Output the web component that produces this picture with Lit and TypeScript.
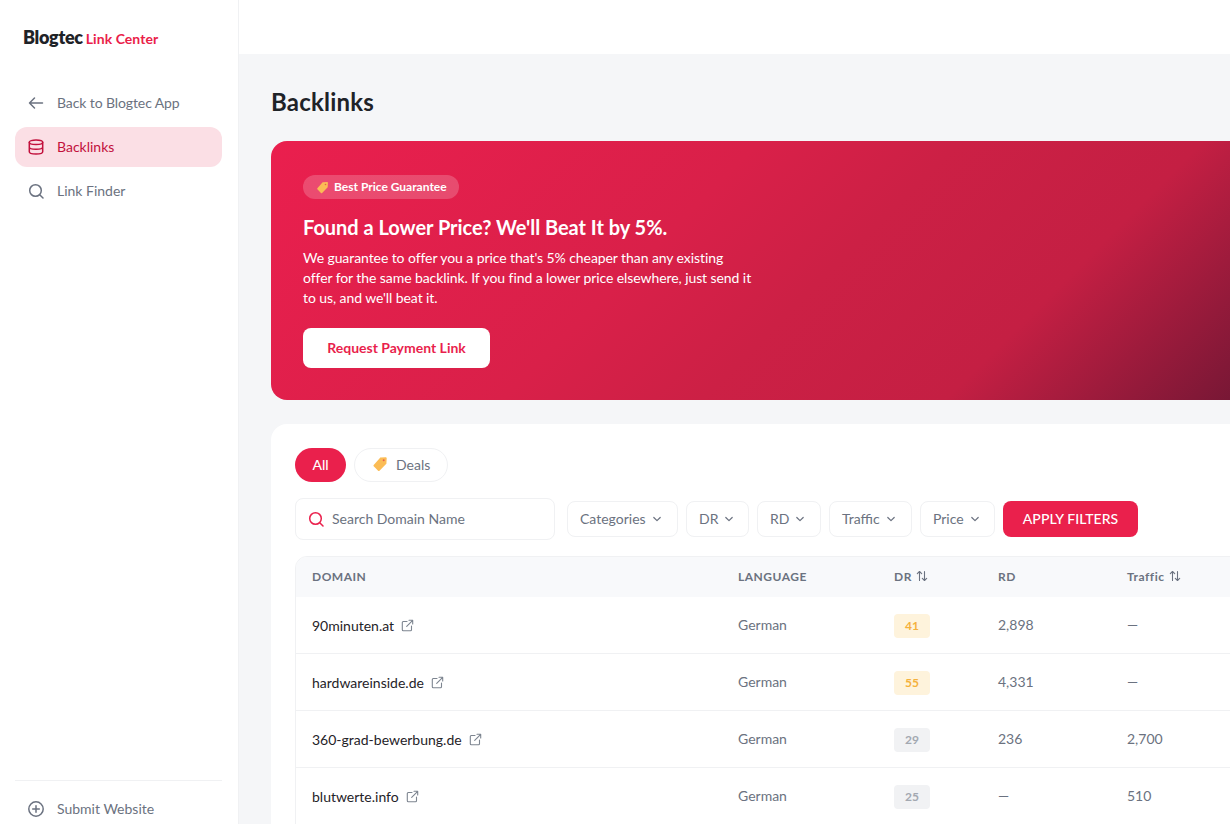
import { LitElement, html, css, svg } from "lit";
import { customElement } from "lit/decorators.js";

const tag = (size: number) => html`<svg class="tagicon" width=${size} height=${size} viewBox="0 0 16 16"><path d="M8.600 1.600l5.200-.3c.5 0 .9.4.9.9l-.3 5.200c0 .3-.1.5-.3.7l-6.600 6.600c-.4.4-1 .4-1.400 0L1.700 10.300c-.4-.4-.4-1 0-1.400l6.200-7c.2-.2.4-.3.7-.3z" fill="#fbbc55"/><circle cx="11.700" cy="4.300" r="1" fill="#e8604c"/></svg>`;
const chev = html`<svg class="chev" width="10" height="10" viewBox="0 0 10 10" fill="none" stroke="currentColor" stroke-width="1.200" stroke-linecap="round" stroke-linejoin="round"><path d="M1.800 3.500 5 6.700l3.200-3.200"/></svg>`;
const ext = html`<svg class="ext" width="13" height="13" viewBox="0 0 13 13" fill="none" stroke="#7d8590" stroke-width="1.100" stroke-linecap="round" stroke-linejoin="round"><path d="M6 2.500H2.300a1 1 0 0 0-1 1v7.200a1 1 0 0 0 1 1h7.200a1 1 0 0 0 1-1V7"/><path d="M5.700 7.300 11.700 1.300M8 1.300h3.700V5"/></svg>`;
const sort = html`<svg class="sort" width="12" height="12" viewBox="0 0 12 12" fill="none" stroke="currentColor" stroke-width="1.100" stroke-linecap="round" stroke-linejoin="round"><path d="M3.500 10.500v-9M1.300 3.700l2.200-2.200 2.200 2.200M8.500 1.500v9M6.300 8.300l2.200 2.200 2.200-2.200"/></svg>`;
const searchPath = svg`<circle cx="7.500" cy="7.500" r="5.800"/><path d="M12 12l3 3"/>`;

const filters = [
  { label: "Categories", w: 111 },
  { label: "DR", w: 63 },
  { label: "RD", w: 64 },
  { label: "Traffic", w: 83 },
  { label: "Price", w: 75 },
];

const rows = [
  { d: "90minuten.at", dr: "41", tone: "y", rd: "2,898", t: "—" },
  { d: "hardwareinside.de", dr: "55", tone: "y", rd: "4,331", t: "—" },
  { d: "360-grad-bewerbung.de", dr: "29", tone: "g", rd: "236", t: "2,700" },
  { d: "blutwerte.info", dr: "25", tone: "g", rd: "—", t: "510" },
];

@customElement("app-root")
export class AppRoot extends LitElement {
  static styles = css`
    :host { display: flex; width: 1230px; height: 824px; overflow: hidden; font-family: Lato, "Liberation Sans", sans-serif; background: #f5f6f8; color: #1f2328; }
    * { box-sizing: border-box; }
    svg { display: block; flex: none; }
    .side { width: 239px; flex: none; height: 824px; background: #fff; border-right: 1px solid #f0f1f3; display: flex; flex-direction: column; padding: 0 16px 0 15px; }
    .logo { height: 83px; padding: 26px 0 0 8px; display: flex; align-items: baseline; gap: 3px; }
    .logo b { font-size: 18px; font-weight: 800; letter-spacing: -0.3px; color: #1f2328; line-height: 22px; }
    .logo span { font-size: 14px; font-weight: 700; color: #ea2049; line-height: 22px; letter-spacing: 0.05px; }
    .nav { display: flex; flex-direction: column; gap: 4px; flex: 1; }
    .item { height: 40px; display: flex; align-items: center; gap: 13px; padding: 0 0 2px 13px; border-radius: 12px; font-size: 14px; color: #6b7280; }
    .item svg { width: 16px; height: 16px; margin-top: 2px; fill: none; stroke: currentColor; stroke-width: 1.500; stroke-linecap: round; stroke-linejoin: round; }
    .item.back { letter-spacing: -0.1px; }
    .item.on { background: #fbdfe5; color: #c2103c; }
    .item.slim { height: 38px; }
    .foot { border-top: 1px solid #f0f1f3; padding-top: 9px; height: 44px; }
    .main { flex: 1; min-width: 0; overflow: hidden; display: flex; flex-direction: column; }
    .top { height: 54px; background: #fff; flex: none; }
    .inner { width: 1400px; padding: 0 0 0 32px; }
    h1 { margin: 0; font-size: 24px; font-weight: 700; line-height: 30px; height: 87px; padding-top: 33px; color: #1f2328; letter-spacing: 0.2px; }
    .hero { height: 259px; border-radius: 16px; background: linear-gradient(135deg, #ea1f4e 0px, #d92049 346px, #cc2045 486px, #c41f43 660px, #781735 861px); padding: 34px 32px; color: #fff; }
    .pill { display: inline-flex; align-items: center; gap: 5px; height: 24px; padding: 0 12px 2px 13px; border-radius: 12px; background: rgba(255,255,255,0.2); font-size: 12px; font-weight: 700; }
    .pill svg { margin-top: 2px; }
    .hero h2 { margin: 14px 0 0; font-size: 20px; font-weight: 700; line-height: 28px; letter-spacing: -0.03px; }
    .hero p { margin: 7px 0 0; width: 450px; font-size: 14px; line-height: 20px; letter-spacing: -0.08px; }
    .cta { margin-top: 20px; width: 187px; height: 40px; border-radius: 8px; background: #fff; color: #e91f4d; font-size: 14px; font-weight: 700; display: flex; align-items: center; justify-content: center; padding-bottom: 2px; }
    .card { margin-top: 24px; background: #fff; border-radius: 16px; padding: 24px; height: 500px; }
    .tabs { display: flex; gap: 8px; }
    .tab { height: 34px; border-radius: 17px; display: flex; align-items: center; font-size: 14px; padding-bottom: 2px; }
    .tab.all { width: 51px; justify-content: center; background: #ea204c; color: #fff; font-weight: 500; }
    .tab.deals { width: 94px; border: 1px solid #f0f1f3; color: #6b7280; padding-left: 17px; gap: 8px; }
    .filters { display: flex; align-items: center; margin-top: 16px; gap: 8px; height: 42px; }
    .search { width: 260px; height: 42px; border: 1px solid #f0f1f3; border-radius: 8px; display: flex; align-items: center; gap: 8px; padding: 0 0 2px 12px; margin-right: 4px; font-size: 14px; color: #6b7280; }
    .search svg { width: 16px; height: 16px; margin-top: 2px; fill: none; stroke: #ea204c; stroke-width: 1.500; stroke-linecap: round; }
    .sel { height: 36px; border: 1px solid #f0f1f3; border-radius: 8px; display: flex; align-items: center; gap: 6px; padding: 0 0 2px 12px; font-size: 14px; color: #6b7280; }
    .chev { color: #6b7280; margin-top: 2px; }
    .apply { width: 135px; height: 36px; border-radius: 8px; background: #ea204c; color: #fff; font-size: 14px; font-weight: 500; display: flex; align-items: center; justify-content: center; padding-bottom: 2px; letter-spacing: 0.05px; }
    .table { margin-top: 16px; min-height: 400px; border: 1px solid #f0f1f3; border-radius: 12px; overflow: hidden; }
    .row { display: grid; grid-template-columns: 426px 156px 104px 129px 1fr; align-items: center; height: 57px; border-bottom: 1px solid #f0f1f3; font-size: 14px; color: #6b7280; }
    .row.head { height: 40px; border-bottom: 0; background: #f8f9fb; font-size: 12px; font-weight: 700; color: #6b7280; letter-spacing: 0.5px; }
    .row.head .nols { letter-spacing: 0.55px; }
    .row > div { padding-left: 16px; display: flex; align-items: center; gap: 4px; margin-bottom: 2px; }
    .row > div.dom { color: #1f2328; gap: 7px; margin-bottom: 0; }
    .row > div.bcell { margin-bottom: 0; margin-top: 2px; }
    .badge { width: 36px; height: 24px; border-radius: 4px; display: flex; align-items: center; justify-content: center; font-size: 12px; font-weight: 700; padding-bottom: 2px; }
    .badge.y { background: #fef3dc; color: #f5b13d; }
    .badge.g { background: #f1f2f4; color: #a3a8b1; }
  `;

  render() {
    return html`
      <aside class="side">
        <div class="logo"><b>Blogtec</b><span>Link Center</span></div>
        <nav class="nav">
          <div class="item back"><svg viewBox="0 0 16 16"><path d="M14.500 8h-13M6.500 3 1.500 8l5 5"/></svg>Back to Blogtec App</div>
          <div class="item on"><svg viewBox="0 0 16 16"><ellipse cx="8" cy="3.300" rx="6.700" ry="2.300"/><path d="M1.300 3.300v9.400c0 1.300 3 2.300 6.700 2.300s6.700-1 6.700-2.300V3.300M1.300 8c0 1.300 3 2.300 6.700 2.300s6.700-1 6.700-2.300"/></svg>Backlinks</div>
          <div class="item"><svg viewBox="0 0 16 16">${searchPath}</svg>Link Finder</div>
        </nav>
        <div class="foot"><div class="item slim"><svg viewBox="0 0 16 16"><circle cx="8" cy="8" r="7.200"/><path d="M8 4.700v6.600M4.700 8h6.600"/></svg>Submit Website</div></div>
      </aside>
      <main class="main">
        <div class="top"></div>
        <div class="inner">
          <h1>Backlinks</h1>
          <section class="hero">
            <div class="pill">${tag(13)}Best Price Guarantee</div>
            <h2>Found a Lower Price? We'll Beat It by 5%.</h2>
            <p>We guarantee to offer you a price that's 5% cheaper than any existing offer for the same backlink. If you find a lower price elsewhere, just send it to us, and we'll beat it.</p>
            <div class="cta">Request Payment Link</div>
          </section>
          <section class="card">
            <div class="tabs">
              <div class="tab all">All</div>
              <div class="tab deals">${tag(16)}Deals</div>
            </div>
            <div class="filters">
              <div class="search"><svg viewBox="0 0 16 16">${searchPath}</svg>Search Domain Name</div>
              ${filters.map(f => html`<div class="sel" style="width:${f.w}px">${f.label} ${chev}</div>`)}
              <div class="apply">APPLY FILTERS</div>
            </div>
            <div class="table">
              <div class="row head">
                <div>DOMAIN</div><div>LANGUAGE</div><div>DR ${sort}</div><div>RD</div><div class="nols">Traffic ${sort}</div>
              </div>
              ${rows.map(r => html`
                <div class="row">
                  <div class="dom">${r.d} ${ext}</div>
                  <div>German</div>
                  <div class="bcell"><span class="badge ${r.tone}">${r.dr}</span></div>
                  <div>${r.rd}</div>
                  <div>${r.t}</div>
                </div>`)}
            </div>
          </section>
        </div>
      </main>
    `;
  }
}
